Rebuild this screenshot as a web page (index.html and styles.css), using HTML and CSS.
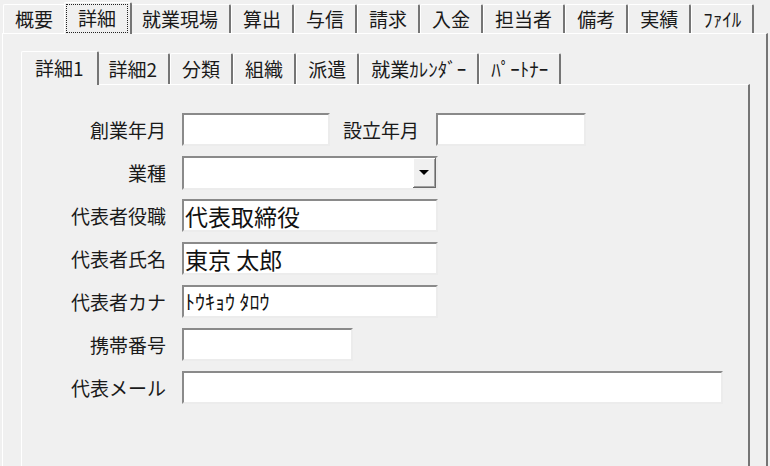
FILE: index.html
```html
<!DOCTYPE html>
<html lang="ja">
<head>
    <meta charset="UTF-8">
    <title>取引先 詳細</title>
    <link rel="stylesheet" href="styles.css">
</head>
<body>
    <div class="window">
        <div class="tabs outer-tabs">
            <span class="tab">概要</span>
            <span class="tab active"><span class="focus">詳細</span></span>
            <span class="tab">就業現場</span>
            <span class="tab">算出</span>
            <span class="tab">与信</span>
            <span class="tab">請求</span>
            <span class="tab">入金</span>
            <span class="tab">担当者</span>
            <span class="tab">備考</span>
            <span class="tab">実績</span>
            <span class="tab">ﾌｧｲﾙ</span>
        </div>
        <div class="panel outer-panel">
            <div class="tabs inner-tabs">
                <span class="tab active">詳細1</span>
                <span class="tab">詳細2</span>
                <span class="tab">分類</span>
                <span class="tab">組織</span>
                <span class="tab">派遣</span>
                <span class="tab">就業ｶﾚﾝﾀﾞｰ</span>
                <span class="tab">ﾊﾟｰﾄﾅｰ</span>
            </div>
            <div class="panel inner-panel">
                <div class="row">
                    <label class="label">創業年月</label>
                    <input class="field w-date" type="text" value="">
                    <label class="label-mid">設立年月</label>
                    <input class="field w-date2" type="text" value="">
                </div>
                <div class="row">
                    <label class="label">業種</label>
                    <div class="field select w-mid">
                        <span class="drop-btn"><i class="arrow"></i></span>
                    </div>
                </div>
                <div class="row">
                    <label class="label">代表者役職</label>
                    <input class="field w-mid" type="text" value="代表取締役">
                </div>
                <div class="row">
                    <label class="label">代表者氏名</label>
                    <input class="field w-mid" type="text" value="東京 太郎">
                </div>
                <div class="row">
                    <label class="label">代表者カナ</label>
                    <input class="field w-mid kana" type="text" value="ﾄｳｷｮｳ ﾀﾛｳ">
                </div>
                <div class="row">
                    <label class="label">携帯番号</label>
                    <input class="field w-tel" type="text" value="">
                </div>
                <div class="row">
                    <label class="label">代表メール</label>
                    <input class="field w-mail" type="text" value="">
                </div>
            </div>
        </div>
    </div>
</body>
</html>
```

FILE: styles.css
```css
/* reset */
body{
    margin: 0;
    background: #f0f0f0;
    color: #1a1a1a;
    font-family: "Noto Sans CJK JP", sans-serif;
    font-size: 19px;
}
input{
    font-family: "Noto Sans CJK JP", sans-serif;
    outline: none;
}
/* window */
.window{
    height: 466px;
    box-sizing: border-box;
    padding: 2px 2px 0 2px;
    display: flex;
    flex-direction: column;
    overflow: hidden;
}
/* tabs */
.tabs{
    display: flex;
    align-items: flex-end;
    padding-left: 1px;
}
.tab{
    box-sizing: border-box;
    height: 29px;
    line-height: 27px;
    padding: 0 11px;
    border-top: 1px solid #fff;
    border-left: 1px solid #fff;
    border-right: 2px solid #757575;
    border-radius: 2px 2px 0 0;
    white-space: nowrap;
    background: #f0f0f0;
}
.tab.active{
    height: 32px;
    line-height: 30px;
    margin: 0 -2px -1px;
    padding: 0 13px;
    position: relative;
    z-index: 1;
}
.outer-tabs .tab.active{
    padding: 0 2px 0 1px;
}
.focus{
    display: inline-block;
    height: 27px;
    line-height: 25px;
    margin-top: 1px;
    padding: 0 11px;
    border: 1px dotted #222;
    vertical-align: top;
}
.inner-tabs{
    padding-left: 2px;
}
.inner-tabs .tab{
    height: 31px;
    line-height: 29px;
}
.inner-tabs .tab.active{
    height: 34px;
    line-height: 31px;
}
/* panels */
.panel{
    border-top: 1px solid #fff;
    border-left: 1px solid #fff;
    border-right: 2px solid #757575;
    flex: 1;
}
.outer-panel{
    display: flex;
    flex-direction: column;
    padding: 17px 16px 0 18px;
}
.inner-panel{
    padding: 28px 0 0 0;
}
/* form */
.row{
    display: flex;
    align-items: center;
    height: 33px;
    margin-bottom: 10px;
}
.label{
    width: 144px;
    margin-right: 16px;
    text-align: right;
    white-space: nowrap;
}
.label-mid{
    margin: 0 17px 0 13px;
    white-space: nowrap;
}
.field{
    box-sizing: border-box;
    height: 33px;
    margin: 0;
    padding: 0 1px;
    border: 2px solid;
    border-color: #8a8a8a #ececec #ececec #8a8a8a;
    background: #fff;
    color: #111;
    font-size: 23px;
}
.field.kana{
    font-size: 20px;
}
.w-date{ width: 148px; }
.w-date2{ width: 150px; }
.w-mid{ width: 256px; }
.w-tel{ width: 171px; }
.w-mail{ width: 541px; }
.select{
    height: 34px;
    padding: 0;
    display: flex;
    justify-content: flex-end;
}
.drop-btn{
    box-sizing: border-box;
    width: 23px;
    height: 30px;
    background: #f0f0f0;
    border-right: 1px solid #6a6a6a;
    border-bottom: 1px solid #6a6a6a;
    box-shadow: inset 1px 1px #fff, inset -1px -1px #a0a0a0;
    display: flex;
    align-items: center;
    justify-content: center;
}
.arrow{
    width: 0;
    height: 0;
    border-left: 5px solid transparent;
    border-right: 5px solid transparent;
    border-top: 5px solid #000;
}
```
